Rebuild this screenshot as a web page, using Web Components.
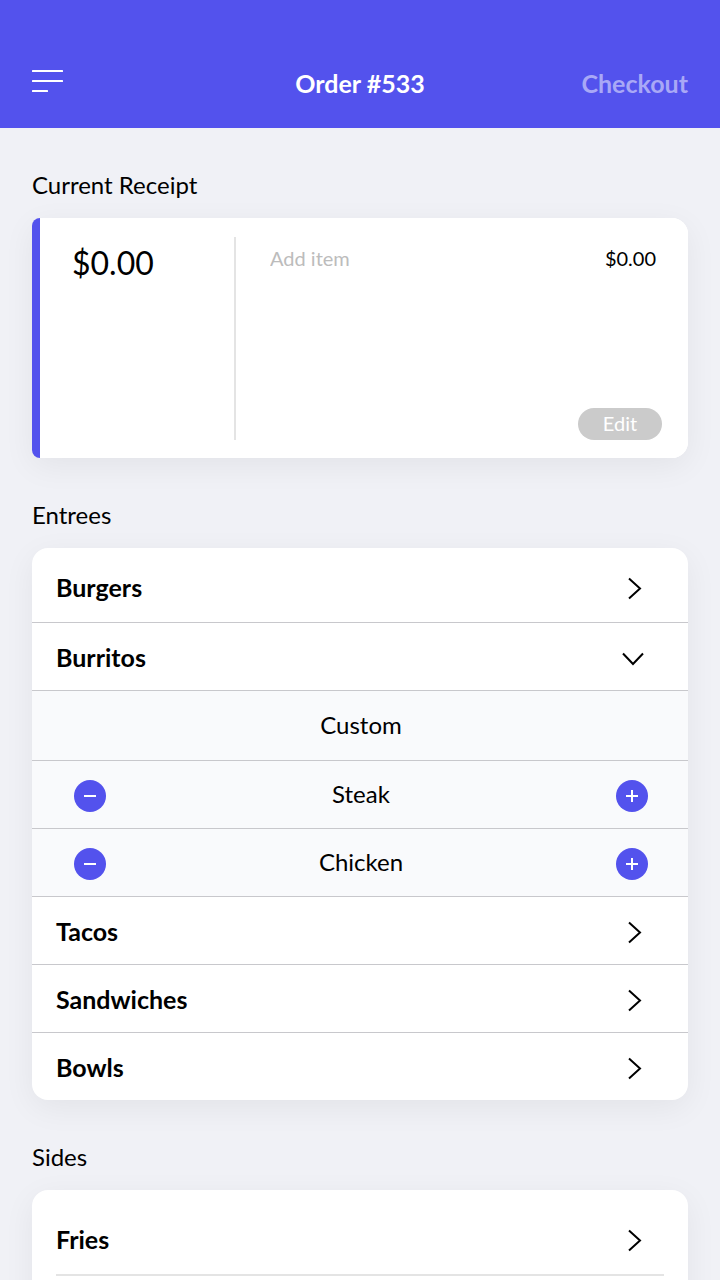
<!DOCTYPE html>
<html lang="en">
<head>
<meta charset="utf-8">
<meta name="viewport" content="width=device-width, initial-scale=1">
<title>Order #533</title>
<style>
  html { --accent: #5352ed; --line: #c8c8cc; --page: #f0f1f6; --shadow: 0 8px 32px rgba(0,0,0,.06); }
  body { margin: 0; background: var(--page); color: #000; font: 400 24px/32px "Avenir Next", Avenir, Lato, sans-serif; }
</style>
</head>
<body>
<order-app>
  <order-header slot="header">Order #533</order-header>
  <menu-section heading="Current Receipt">
    <receipt-card total="$0.00" price="$0.00"></receipt-card>
  </menu-section>
  <menu-section heading="Entrees">
    <list-card>
      <menu-row first>Burgers</menu-row>
      <menu-row open>Burritos</menu-row>
      <option-row plain>Custom</option-row>
      <option-row>Steak</option-row>
      <option-row>Chicken</option-row>
      <menu-row>Tacos</menu-row>
      <menu-row>Sandwiches</menu-row>
      <menu-row last>Bowls</menu-row>
    </list-card>
  </menu-section>
  <menu-section heading="Sides">
    <list-card more>
      <menu-row inset>Fries</menu-row>
    </list-card>
  </menu-section>
</order-app>

<script>
const reset = `
  :host, *, *::before, *::after { box-sizing: border-box; }
  button, input { font: inherit; color: inherit; background: none; border: 0; margin: 0; padding: 0; }
  button { cursor: pointer; }
  svg { display: block; flex: none; }
`;

class Base extends HTMLElement {
  constructor() {
    super();
    this.attachShadow({ mode: "open" });
  }
  connectedCallback() {
    this.shadowRoot.innerHTML = `<style>${reset}${this.styles()}</style>${this.markup()}`;
  }
}

customElements.define("order-app", class extends Base {
  styles() {
    return `
      :host { display: flex; flex-direction: column; height: 100vh; }
      main { flex: 1; min-height: 0; overflow-y: auto; scrollbar-width: none; padding: 0 32px 40px; }
    `;
  }
  markup() {
    return `<slot name="header"></slot><main><slot></slot></main>`;
  }
});

customElements.define("order-header", class extends Base {
  styles() {
    return `
      :host { display: block; flex: none; background: var(--accent); color: #fff; }
      header { display: grid; grid-template-columns: 1fr auto 1fr; align-items: center; min-height: 128px; padding: 38px 32px 0; }
      h1 { margin: 0; font-size: 25px; font-weight: 700; }
      button { justify-self: start; }
      .checkout { justify-self: end; font-size: 25px; font-weight: 700; color: #a9a8f6; }
    `;
  }
  markup() {
    return `<header>
      <button aria-label="Menu"><svg width="32" height="26" viewBox="0 0 32 26" fill="#fff">
        <rect width="31" height="2" rx="0.500"/><rect y="10" width="31" height="2" rx="0.500"/><rect y="20" width="16" height="2" rx="0.500"/>
      </svg></button>
      <h1><slot></slot></h1>
      <button class="checkout">Checkout</button>
    </header>`;
  }
});

customElements.define("menu-section", class extends Base {
  styles() {
    return `
      :host { display: block; padding-top: 40px; }
      h2 { margin: 0 0 16px; font-size: 24px; line-height: 34px; font-weight: 400; }
    `;
  }
  markup() {
    return `<section><h2>${this.getAttribute("heading")}</h2><slot></slot></section>`;
  }
});

customElements.define("receipt-card", class extends Base {
  styles() {
    return `
      :host { display: block; background: linear-gradient(to right, var(--accent) 24px, #fff 24px); border-radius: 8px 16px 16px 8px; box-shadow: var(--shadow); }
      .body { display: flex; min-height: 240px; margin-left: 8px; padding: 19px 26px 18px 32px; background: #fff; border-radius: 0 16px 16px 0; }
      .total { flex: 0 0 164px; padding-top: 6px; font-size: 32px; line-height: 40px; border-right: 2px solid #e4e4e4; }
      .items { flex: 1; min-width: 0; display: flex; flex-direction: column; justify-content: space-between; padding-left: 34px; font-size: 20px; }
      .item { display: flex; padding: 5px 6px 0 0; }
      input { flex: 1; min-width: 0; height: 32px; outline: 0; }
      input::placeholder { color: #bcbcbc; opacity: 1; }
      button { align-self: flex-end; width: 84px; height: 32px; line-height: 24px; padding-bottom: 2px; border-radius: 16px; background: #cbcbcb; color: #fff; }
    `;
  }
  markup() {
    return `<div class="body">
      <div class="total">${this.getAttribute("total")}</div>
      <div class="items">
        <div class="item"><input type="text" aria-label="Add item" placeholder="Add item"><span>${this.getAttribute("price")}</span></div>
        <button>Edit</button>
      </div>
    </div>`;
  }
});

customElements.define("list-card", class extends Base {
  styles() {
    return `
      :host { display: block; background: #fff; border-radius: 16px; overflow: hidden; box-shadow: var(--shadow); }
      :host([more]) { padding-bottom: 40px; }
    `;
  }
  markup() { return `<slot></slot>`; }
});

customElements.define("menu-row", class extends Base {
  styles() {
    return `
      :host { display: block; border-bottom: 1px solid var(--line); }
      :host([last]), :host([inset]) { border-bottom: 0; }
      button { display: flex; align-items: center; justify-content: space-between; width: 100%; min-height: 67px; padding: 2px 42px 0 24px; font-size: 25px; font-weight: 700; text-align: left; }
      span { padding-bottom: 2px; }
      :host([first]) button { min-height: 74px; padding-top: 6px; }
      :host([inset]) button { min-height: 84px; padding-top: 16px; }
      :host([inset])::after { content: ""; display: block; height: 2px; margin: 0 24px; background: #e4e4e4; }
    `;
  }
  markup() {
    const open = this.hasAttribute("open");
    const d = open ? "M1 7.500 11 18 21 7.500" : "M7 2.500 18 12.500 7 22.500";
    return `<button aria-expanded="${open}"><span><slot></slot></span>
      <svg width="24" height="24" viewBox="0 0 24 24" fill="none" stroke="#000" stroke-width="2" overflow="visible"><path d="${d}"/></svg>
    </button>`;
  }
});

customElements.define("option-row", class extends Base {
  styles() {
    return `
      :host { display: grid; grid-template-columns: 32px 1fr 32px; align-items: center; min-height: 68px; padding: 2px 40px 0 42px; background: #f9fafc; border-bottom: 1px solid var(--line); }
      :host([plain]) { min-height: 70px; }
      span { grid-column: 2; padding-bottom: 3px; text-align: center; }
      button { width: 32px; height: 32px; border-radius: 50%; background: var(--accent); }
    `;
  }
  markup() {
    if (this.hasAttribute("plain")) return `<span><slot></slot></span>`;
    const icon = d => `<svg width="32" height="32" viewBox="0 0 32 32" stroke="#fff" stroke-width="2"><path d="${d}"/></svg>`;
    return `<button aria-label="Remove one">${icon("M10 16h12")}</button>
      <span><slot></slot></span>
      <button aria-label="Add one">${icon("M10 16h12M16 10v12")}</button>`;
  }
});
</script>
</body>
</html>
